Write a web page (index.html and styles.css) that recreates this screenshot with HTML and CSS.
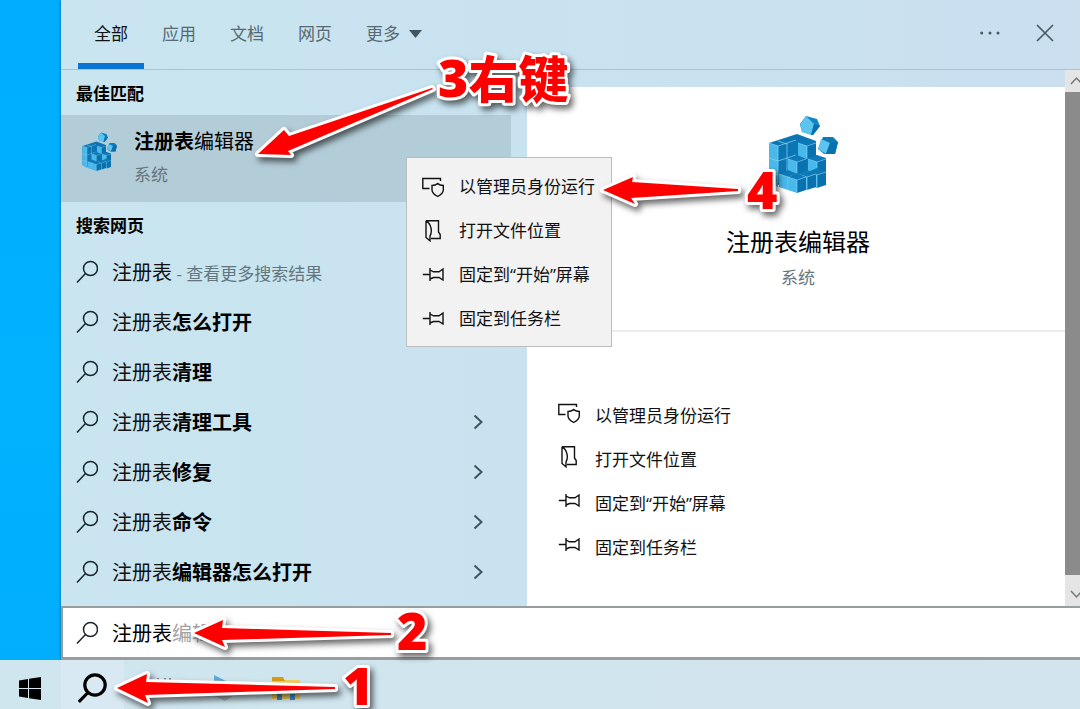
FILE: index.html
```html
<!DOCTYPE html>
<html lang="zh-CN">
<head>
<meta charset="utf-8">
<title>注册表编辑器</title>
<link rel="stylesheet" href="styles.css">
</head>
<body>
<svg class="defs" width="0" height="0" aria-hidden="true">
  <symbol id="i-search" viewBox="0 0 22 24"><circle cx="14.5" cy="8.5" r="7"/><path d="M9.5 13.5 1 22.500"/></symbol>
  <symbol id="i-shield" viewBox="0 0 22 22"><path d="M18.500 5V2.500H.8V12.500H7.500"/><path d="M15.700 7.500C14 9 12 9.500 10 9.500V14c0 3 3 5 5.700 6.500 2.700-1.500 5.600-3.500 5.600-6.500V9.500c-2 0-4-.5-5.600-2z"/></symbol>
  <symbol id="i-folder" viewBox="0 0 22 22"><path d="M4 .8H16.500V12l1.700 2.500V18.500H9M4 .8V17.500L8 20.800V16Q10 13 9 8 8 3 4 .8"/></symbol>
  <symbol id="i-pin" viewBox="0 0 22 22"><path d="M.8 10.500H8M8 4V17M8 6L11.500 7.800H17L21 5V16L17 13.500H11.500L8 15"/></symbol>
  <symbol id="i-next" viewBox="0 0 10 16"><path d="M1.500 1.500 8.500 8 1.500 14.500"/></symbol>
  <symbol id="cube" viewBox="-9 -7 18 20" overflow="visible">
    <path fill="#0e79b8" d="M0 0-9-3 0-7 9-3z"/>
    <path fill="#48b9ea" d="M0 0-9-3V10L0 13z"/>
    <path fill="#0871ae" d="M0 0 9-3V10L0 13z"/>
    <path fill="none" stroke="#8ed5f2" stroke-width=".6" d="M-9-3 0 0 9-3M0 0V13"/>
  </symbol>
  <symbol id="i-regedit" viewBox="0 0 72 78">
    <path fill="#0c76b4" d="M1 28 29 19 48 26V40L58 43V68L29 77 1 66z"/>
    <path fill="#48b9ea" d="M1 28 10 31V72L1 67z"/>
    <path stroke="#8ed5f2" stroke-width=".7" fill="none" d="M1 28 10 31 28 25M10 31V68M1 43 10 46 28 40M19 28V58M10 26 19 29M1 57 10 60"/>
    <use href="#cube" x="30" y="24" width="18" height="20"/>
    <use href="#cube" x="20" y="40" width="18" height="20"/>
    <use href="#cube" x="40" y="40" width="18" height="20"/>
    <use href="#cube" x="40" y="53" width="18" height="20"/>
    <use href="#cube" x="30" y="55" width="18" height="20"/>
    <use href="#cube" x="11" y="55" width="18" height="20"/>
    <use href="#cube" x="20" y="58" width="18" height="20"/>
    <path fill="#1186c6" d="M38 1 49 4 52 11 45 20 34 17 32 9z"/>
    <path fill="#5cc4ee" d="M32 10 38 1 46 9 43 20 34 17z"/>
    <path fill="#0871ae" d="M46 9 52 11 45 20 43 20z"/>
    <path fill="#0e79b8" d="M55 22 65 22 70 27 67 39 56 39 50 34z"/>
    <path fill="#5cc4ee" d="M53 24 62 28 58 39 50 34z"/>
    <path fill="#0871ae" d="M62 28 70 27 67 39 58 39z"/>
  </symbol>
</svg>

<div class="screen">
  <div class="desktop">
    <main class="panel">
      <header class="tabs">
        <nav class="tab-list">
          <button class="tab tab-active">全部</button>
          <button class="tab">应用</button>
          <button class="tab">文档</button>
          <button class="tab">网页</button>
          <button class="tab">更多<svg class="caret" viewBox="0 0 13 8"><path d="M0 0H13L6.500 8z"/></svg></button>
        </nav>
        <button class="tool" aria-label="选项"><svg width="20" height="20" viewBox="0 0 20 20"><g fill="#4a5a64"><circle cx="1.700" cy="10" r="1.500"/><circle cx="10" cy="10" r="1.500"/><circle cx="18" cy="10" r="1.500"/></g></svg></button>
        <button class="tool" aria-label="关闭"><svg width="18" height="18" viewBox="0 0 18 18"><path d="M1 1 17 17M17 1 1 17" stroke="#4a5a64" stroke-width="1.700"/></svg></button>
      </header>

      <div class="content">
        <section class="results">
          <h2 class="group">最佳匹配</h2>
          <button class="best">
            <svg class="best-icon"><use href="#i-regedit"/></svg>
            <span class="best-text"><span class="best-name"><b>注册表</b>编辑器</span><span class="kind">系统</span></span>
          </button>
          <h2 class="group">搜索网页</h2>
          <ul class="list">
            <li><button class="row"><svg class="find"><use href="#i-search"/></svg><span>注册表<small> - 查看更多搜索结果</small></span></button></li>
            <li><button class="row"><svg class="find"><use href="#i-search"/></svg><span>注册表<b>怎么打开</b></span></button></li>
            <li><button class="row"><svg class="find"><use href="#i-search"/></svg><span>注册表<b>清理</b></span></button></li>
            <li><button class="row"><svg class="find"><use href="#i-search"/></svg><span>注册表<b>清理工具</b></span><svg class="next"><use href="#i-next"/></svg></button></li>
            <li><button class="row"><svg class="find"><use href="#i-search"/></svg><span>注册表<b>修复</b></span><svg class="next"><use href="#i-next"/></svg></button></li>
            <li><button class="row"><svg class="find"><use href="#i-search"/></svg><span>注册表<b>命令</b></span><svg class="next"><use href="#i-next"/></svg></button></li>
            <li><button class="row"><svg class="find"><use href="#i-search"/></svg><span>注册表<b>编辑器怎么打开</b></span><svg class="next"><use href="#i-next"/></svg></button></li>
          </ul>
        </section>

        <section class="detail">
          <div class="hero">
            <svg class="hero-icon"><use href="#i-regedit"/></svg>
            <h1 class="hero-name">注册表编辑器</h1>
            <span class="kind">系统</span>
          </div>
          <div class="actions">
            <button class="action"><svg class="glyph"><use href="#i-shield"/></svg>以管理员身份运行</button>
            <button class="action"><svg class="glyph"><use href="#i-folder"/></svg>打开文件位置</button>
            <button class="action"><svg class="glyph"><use href="#i-pin"/></svg>固定到“开始”屏幕</button>
            <button class="action"><svg class="glyph"><use href="#i-pin"/></svg>固定到任务栏</button>
          </div>
        </section>

        <div class="scroll">
          <svg class="scroll-up" viewBox="0 0 15 22"><path d="M6 14 11.500 8 17 14"/></svg>
          <div class="thumb"></div>
          <svg class="scroll-down" viewBox="0 0 15 31"><path d="M6 16 11.500 22 17 16"/></svg>
        </div>
      </div>

      <label class="search">
        <svg class="find"><use href="#i-search"/></svg>
        <input class="query" type="text" value="注册表" aria-label="搜索"><span class="ghost">编辑</span>
      </label>
    </main>
  </div>

  <footer class="taskbar">
    <button class="start" aria-label="开始"><svg width="22" height="23" viewBox="0 0 22 23"><path d="M0 3.500 9 2V11H0zM10 1.800 22 0V11H10zM0 12H9V21L0 19.500zM10 12H22V23L10 21.200z"/></svg></button>
    <button class="task-search" aria-label="搜索"><svg width="30" height="31" viewBox="0 0 30 31"><g fill="none" stroke="#000" stroke-width="3.200"><circle cx="17" cy="12" r="10.200"/><path d="M10 19.500 .8 29"/></g></svg></button>
    <button class="task" aria-label="任务视图"><svg width="18" height="24" viewBox="0 0 18 24"><path fill="none" stroke="#555" stroke-width="1.200" d="M2 2V4M9 2V4M14 2V4"/></svg></button>
    <button class="task" aria-label="应用"><svg width="20" height="28" viewBox="0 0 20 28"><path fill="#5fa9dc" d="M0 1 20 11 0 18z"/><path fill="#a9bdc6" d="M0 22 11 27 19 22z"/></svg></button>
    <button class="task" aria-label="文件资源管理器"><svg width="28" height="25" viewBox="0 0 28 25"><path fill="#f5cf5b" d="M0 4H28V23H0z"/><path fill="#d99a14" d="M0 1H11L13 5H0z"/><path fill="#3e8ed0" d="M5 18H10V24H5zM18 18H23V24H18z"/></svg></button>
  </footer>

  <div class="menu" role="menu">
    <button class="action" role="menuitem"><svg class="glyph"><use href="#i-shield"/></svg>以管理员身份运行</button>
    <button class="action" role="menuitem"><svg class="glyph"><use href="#i-folder"/></svg>打开文件位置</button>
    <button class="action" role="menuitem"><svg class="glyph"><use href="#i-pin"/></svg>固定到“开始”屏幕</button>
    <button class="action" role="menuitem"><svg class="glyph"><use href="#i-pin"/></svg>固定到任务栏</button>
  </div>

  <svg class="notes" width="1080" height="709" viewBox="0 0 1080 709">
    <g class="arrows">
      <path d="M258 154 284 130 289 136 432 88 433 89 288 151 291 155z"/>
      <path d="M603 190 633 177 632 182 738 189V191L631 198 635 204z"/>
      <path d="M194 633 223 620 222 628 391 633V635L222 640 225 647z"/>
      <path d="M117 688 147 674 146 682 335 687V689L145 695 148 703z"/>
    </g>
    <g class="steps">
      <text x="438" y="97">3<tspan class="hanzi" y="98">右键</tspan></text>
      <text x="747" y="209">4</text>
      <text x="397" y="650">2</text>
      <text x="343" y="705">1</text>
    </g>
  </svg>
</div>
</body>
</html>
```
FILE: styles.css
```css
* { box-sizing: border-box; }

body {
  margin: 0;
  font-family: "Open Sans", "Noto Sans CJK SC", sans-serif;
  font-size: 17px;
  line-height: 24px;
  color: #111;
}

button {
  margin: 0;
  padding: 0;
  border: 0;
  background: none;
  font: inherit;
  color: inherit;
  text-align: left;
}

svg { display: block; flex: none; }

.defs { position: absolute; }

.screen {
  position: relative;
  display: flex;
  flex-direction: column;
  min-height: 100vh;
  overflow: hidden;
}

.desktop {
  flex: 1;
  display: flex;
  padding-left: 61px;
  background: linear-gradient(#00adff, #00b2ff 60%, #00aefd);
}

.panel {
  flex: 1;
  display: flex;
  flex-direction: column;
  background: linear-gradient(90deg, #c9e5f0, #c8e3ef 45%, #cbdfef);
  box-shadow: 0 0 3px #1d5f80;
}

.tabs {
  display: flex;
  align-items: center;
  height: 70px;
  padding-right: 26px;
  border-bottom: 1px solid #aac3d0;
}

.tab-list {
  flex: 1;
  display: flex;
  gap: 2px;
  align-self: stretch;
  padding-left: 17px;
}

.tab {
  display: flex;
  align-items: center;
  gap: 9px;
  padding: 0 16px;
  border-bottom: 6px solid transparent;
  border-top: 4px solid transparent;
  color: #576972;
}

.tab-active { color: #111; border-bottom-color: #0a74d4; }

.caret { width: 13px; height: 8px; fill: #43555f; }

.tool { margin-left: 36px; padding-bottom: 4px; }

.content { flex: 1; display: flex; }

.results { width: 466px; }

.group {
  margin: 0;
  padding: 11px 15px 9px;
  font-size: 17px;
  line-height: 25px;
  color: #000;
}

.best {
  display: flex;
  align-items: flex-start;
  gap: 16px;
  width: 450px;
  height: 87px;
  padding: 13px 0 0 21px;
  background: #b3cdd8;
}

.best-icon { width: 36px; height: 39px; margin-top: 4px; }

.best-text { display: flex; flex-direction: column; gap: 7px; }

.best-name { font-size: 20px; line-height: 28px; color: #000; }

.kind { color: #66747c; }

.list { margin: 0; padding: 0; list-style: none; }

.row {
  display: flex;
  align-items: center;
  gap: 14px;
  width: 100%;
  height: 50px;
  padding: 0 44px 0 15px;
  font-size: 20px;
  line-height: 28px;
}

.row span { padding-top: 2px; }

.row small { font-size: 17px; color: #64757e; }

.row b { color: #000; }

.find { width: 22px; height: 24px; fill: none; stroke: #17252c; stroke-width: 1.5; }

.next { width: 10px; height: 16px; margin-left: auto; fill: none; stroke: #40535e; stroke-width: 2; }

.detail {
  flex: 1;
  margin-top: 17px;
  background: #fff;
}

.hero {
  display: flex;
  flex-direction: column;
  align-items: center;
  height: 245px;
  padding-top: 28px;
  padding-left: 4px;
  border-bottom: 2px solid #ededed;
}

.hero-icon { width: 72px; height: 78px; margin-left: 12px; }

.hero-name {
  margin: 32px 0 7px;
  font-size: 24px;
  font-weight: 400;
  line-height: 34px;
  color: #000;
}

.actions { padding: 62px 31px 0; }

.action {
  display: flex;
  align-items: center;
  gap: 15px;
  width: 100%;
  height: 44px;
  white-space: nowrap;
}

.glyph { width: 22px; height: 22px; fill: none; stroke: #111; stroke-width: 1.4; }

.actions .glyph { margin-bottom: 6px; }

.scroll {
  display: flex;
  flex-direction: column;
  width: 15px;
  background: #e5e5e5;
}

.scroll svg { width: 15px; fill: none; stroke: #777; stroke-width: 1.5; }

.scroll-up { height: 22px; }

.scroll-down { height: 31px; }

.thumb { flex: 1; background: #8b8b8b; }

.search {
  display: flex;
  align-items: center;
  height: 54px;
  padding-left: 13px;
  border: 2px solid #989da0;
  border-right: 0;
  border-bottom-width: 3px;
  background: #fff;
  font-size: 20px;
  line-height: 28px;
}

.query {
  width: 60px;
  margin-left: 14px;
  padding: 2px 0 0;
  border: 0;
  outline: 0;
  background: none;
  font: inherit;
  color: #000;
}

.ghost { padding-top: 2px; color: #a2a2a2; }

.taskbar {
  display: flex;
  align-items: center;
  height: 49px;
  background: linear-gradient(90deg, #cfe6ef, #d2e4ee);
}

.start { display: flex; justify-content: center; width: 61px; padding-top: 7px; padding-right: 2px; }

.task-search { width: 63px; height: 49px; margin-right: 6px; padding: 13px 17px; background: #d8e9f3; }

.task { width: 58px; padding: 7px 0 0 26px; }

.menu {
  position: absolute;
  left: 406px;
  top: 157px;
  width: 206px;
  padding: 7px 15px 5px;
  border: 1px solid #bdbdbd;
  background: #f2f2f2;
}

.notes { position: absolute; left: 0; top: 0; pointer-events: none; }

.arrows, .steps { filter: drop-shadow(3px 4px 3px rgba(0, 0, 0, .6)); }

.arrows path, .steps text {
  fill: #fe0000;
  stroke: #fff;
  stroke-width: 6px;
  stroke-linejoin: round;
  paint-order: stroke;
}

.steps text { font-size: 52px; font-weight: 800; }

.steps .hanzi { font-size: 50px; font-weight: 900; }
```
